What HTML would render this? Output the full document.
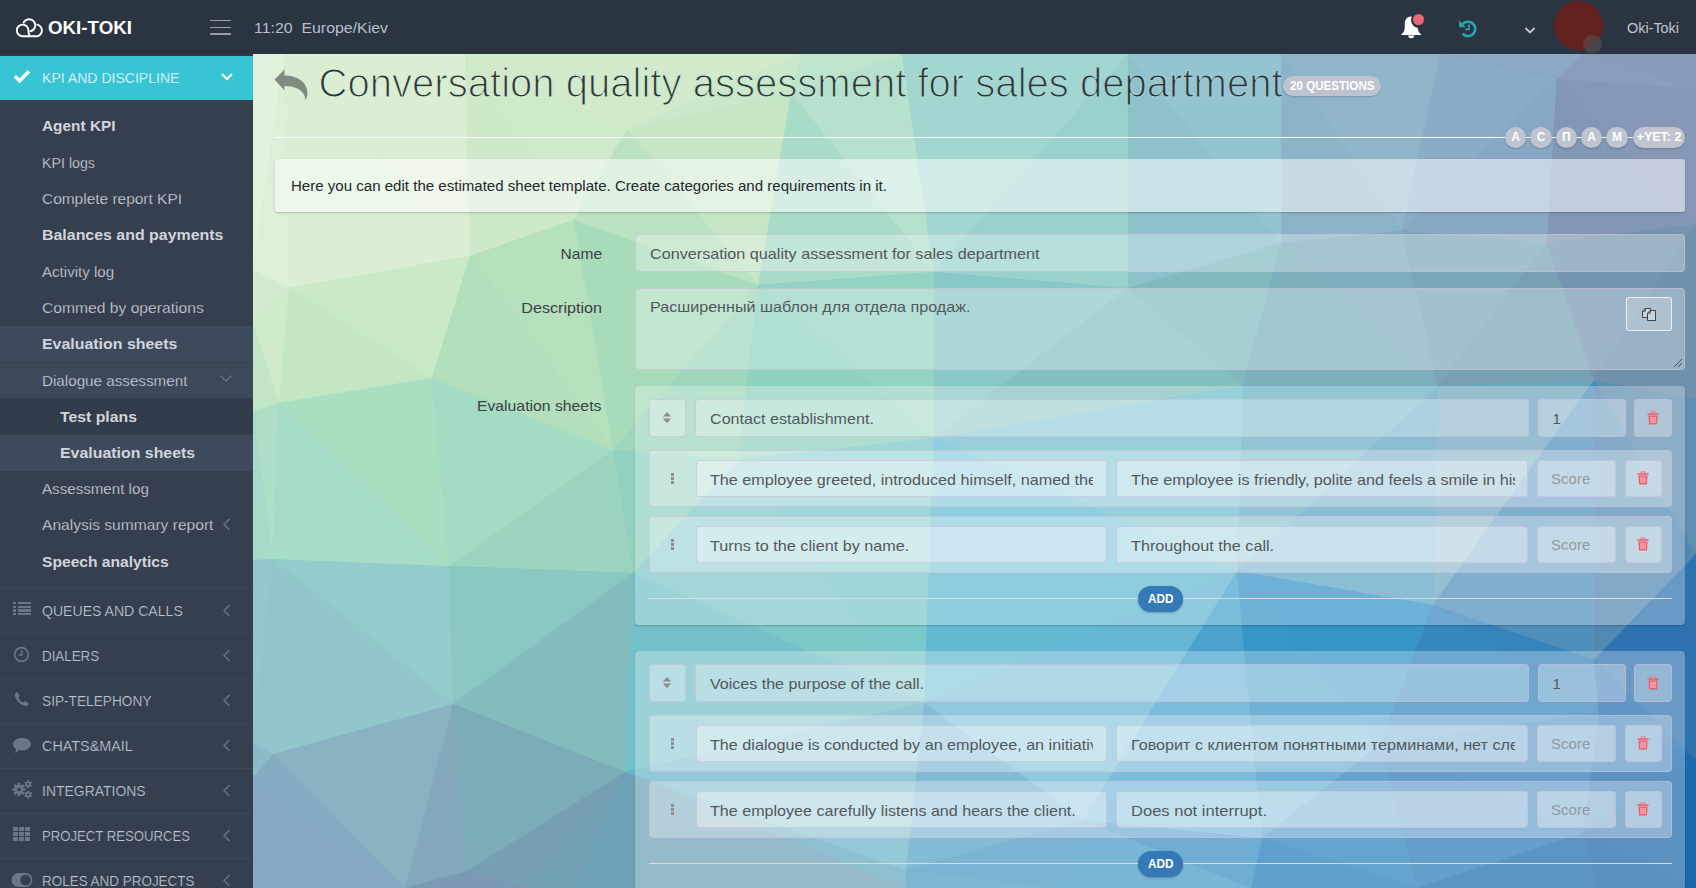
<!DOCTYPE html>
<html><head><meta charset="utf-8">
<style>
*{box-sizing:border-box;margin:0;padding:0}
html,body{width:1696px;height:888px;overflow:hidden;font-family:"Liberation Sans",sans-serif;background:#2b3543;position:relative}
.abs{position:absolute}
.t{position:absolute;white-space:nowrap;line-height:1}
.av{position:absolute;top:127px;height:21px;border-radius:11px;background:#bec5d0;color:#fff;font-weight:bold;font-size:12px;text-align:center;line-height:21px;box-shadow:0 1px 2px rgba(0,0,0,0.2)}
</style></head><body>
<div class="abs" style="left:253px;top:54px;width:1443px;height:834px;overflow:hidden"><svg width="1443" height="834" viewBox="0 0 1443 834" style="position:absolute;left:0;top:0"><polygon points="485,406 505,231 681,384" fill="#8fd1c1" stroke="#8fd1c1" stroke-width="0.6"/><polygon points="671,649 485,406 681,384" fill="#7ac8c9" stroke="#7ac8c9" stroke-width="0.6"/><polygon points="485,406 671,649 380,519" fill="#7ec7c8" stroke="#7ec7c8" stroke-width="0.6"/><polygon points="671,649 372,718 380,519" fill="#75c1c9" stroke="#75c1c9" stroke-width="0.6"/><polygon points="20,505 0,506 0,357" fill="#a7dbc8" stroke="#a7dbc8" stroke-width="0.6"/><polygon points="360,396 485,406 380,519" fill="#92d1bf" stroke="#92d1bf" stroke-width="0.6"/><polygon points="360,396 380,519 196,512" fill="#9bd5c0" stroke="#9bd5c0" stroke-width="0.6"/><polygon points="179,324 360,396 196,512" fill="#a4dbc3" stroke="#a4dbc3" stroke-width="0.6"/><polygon points="505,231 360,396 321,166" fill="#a8dbba" stroke="#a8dbba" stroke-width="0.6"/><polygon points="485,406 360,396 505,231" fill="#9ed7bc" stroke="#9ed7bc" stroke-width="0.6"/><polygon points="323,834 372,718 653,834" fill="#6ca1b6" stroke="#6ca1b6" stroke-width="0.6"/><polygon points="372,718 323,834 276,834" fill="#72a0b3" stroke="#72a0b3" stroke-width="0.6"/><polygon points="200,650 20,505 196,512" fill="#93ccca" stroke="#93ccca" stroke-width="0.6"/><polygon points="380,519 200,650 196,512" fill="#8cc8c2" stroke="#8cc8c2" stroke-width="0.6"/><polygon points="372,718 200,650 380,519" fill="#82bcbc" stroke="#82bcbc" stroke-width="0.6"/><polygon points="1294,189 1341,326 1185,332" fill="#77a1b3" stroke="#77a1b3" stroke-width="0.6"/><polygon points="1341,326 1443,170 1443,346" fill="#6e91ac" stroke="#6e91ac" stroke-width="0.6"/><polygon points="1443,170 1341,326 1294,189" fill="#7594b0" stroke="#7594b0" stroke-width="0.6"/><polygon points="1330,779 1443,706 1443,834" fill="#1c68ab" stroke="#1c68ab" stroke-width="0.6"/><polygon points="1341,326 1180,551 1185,332" fill="#6ea4be" stroke="#6ea4be" stroke-width="0.6"/><polygon points="1180,551 1341,326 1341,606" fill="#508fbb" stroke="#508fbb" stroke-width="0.6"/><polygon points="681,218 538,39 649,0" fill="#b6e1cc" stroke="#b6e1cc" stroke-width="0.6"/><polygon points="538,39 681,218 505,231" fill="#a9dcc8" stroke="#a9dcc8" stroke-width="0.6"/><polygon points="875,0 681,218 649,0" fill="#a2d6d1" stroke="#a2d6d1" stroke-width="0.6"/><polygon points="681,218 875,0 875,234" fill="#99d2cd" stroke="#99d2cd" stroke-width="0.6"/><polygon points="505,231 681,218 681,384" fill="#94d3c3" stroke="#94d3c3" stroke-width="0.6"/><polygon points="681,218 875,234 681,384" fill="#88c8c6" stroke="#88c8c6" stroke-width="0.6"/><polygon points="875,234 990,332 681,384" fill="#83c1bf" stroke="#83c1bf" stroke-width="0.6"/><polygon points="26,349 20,505 0,357" fill="#aedec6" stroke="#aedec6" stroke-width="0.6"/><polygon points="26,349 36,234 179,324" fill="#c3e6c5" stroke="#c3e6c5" stroke-width="0.6"/><polygon points="26,349 179,324 196,512" fill="#aadec1" stroke="#aadec1" stroke-width="0.6"/><polygon points="20,505 26,349 196,512" fill="#a7dcc6" stroke="#a7dcc6" stroke-width="0.6"/><polygon points="374,75 505,231 321,166" fill="#bce3c1" stroke="#bce3c1" stroke-width="0.6"/><polygon points="374,75 538,39 505,231" fill="#c6e6c6" stroke="#c6e6c6" stroke-width="0.6"/><polygon points="212,0 374,75 321,166" fill="#cfeaca" stroke="#cfeaca" stroke-width="0.6"/><polygon points="538,39 548,0 649,0" fill="#c0e4ce" stroke="#c0e4ce" stroke-width="0.6"/><polygon points="548,0 374,75 212,0" fill="#d0eacb" stroke="#d0eacb" stroke-width="0.6"/><polygon points="374,75 548,0 538,39" fill="#cae8ca" stroke="#cae8ca" stroke-width="0.6"/><polygon points="32,0 0,216 0,0" fill="#e2f2dc" stroke="#e2f2dc" stroke-width="0.6"/><polygon points="36,234 0,216 32,0" fill="#ddefd7" stroke="#ddefd7" stroke-width="0.6"/><polygon points="212,0 217,202 32,0" fill="#dbeed4" stroke="#dbeed4" stroke-width="0.6"/><polygon points="217,202 36,234 32,0" fill="#daeed4" stroke="#daeed4" stroke-width="0.6"/><polygon points="217,202 212,0 321,166" fill="#cde9c9" stroke="#cde9c9" stroke-width="0.6"/><polygon points="36,234 217,202 179,324" fill="#c9e9c7" stroke="#c9e9c7" stroke-width="0.6"/><polygon points="360,396 217,202 321,166" fill="#b5e1bc" stroke="#b5e1bc" stroke-width="0.6"/><polygon points="217,202 360,396 179,324" fill="#b2e0bc" stroke="#b2e0bc" stroke-width="0.6"/><polygon points="152,834 214,817 276,834" fill="#7b99b3" stroke="#7b99b3" stroke-width="0.6"/><polygon points="200,650 214,817 152,834" fill="#83a7bb" stroke="#83a7bb" stroke-width="0.6"/><polygon points="214,817 372,718 276,834" fill="#769fb3" stroke="#769fb3" stroke-width="0.6"/><polygon points="214,817 200,650 372,718" fill="#7cacb7" stroke="#7cacb7" stroke-width="0.6"/><polygon points="20,700 200,650 152,834" fill="#89b2c2" stroke="#89b2c2" stroke-width="0.6"/><polygon points="200,650 20,700 20,505" fill="#91c7ca" stroke="#91c7ca" stroke-width="0.6"/><polygon points="1187,0 1149,177 1028,0" fill="#91b6ca" stroke="#91b6ca" stroke-width="0.6"/><polygon points="1149,177 1294,189 1185,332" fill="#7ba5b8" stroke="#7ba5b8" stroke-width="0.6"/><polygon points="1443,500 1341,326 1443,346" fill="#5f8fb0" stroke="#5f8fb0" stroke-width="0.6"/><polygon points="1341,326 1443,500 1341,606" fill="#5289b3" stroke="#5289b3" stroke-width="0.6"/><polygon points="1443,500 1443,706 1341,606" fill="#2e73af" stroke="#2e73af" stroke-width="0.6"/><polygon points="1165,834 998,834 1009,784" fill="#227bb8" stroke="#227bb8" stroke-width="0.6"/><polygon points="1346,659 1180,551 1341,606" fill="#3684bc" stroke="#3684bc" stroke-width="0.6"/><polygon points="1443,706 1346,659 1341,606" fill="#236eaf" stroke="#236eaf" stroke-width="0.6"/><polygon points="1330,779 1346,659 1443,706" fill="#1d6bae" stroke="#1d6bae" stroke-width="0.6"/><polygon points="1180,551 984,517 1185,332" fill="#5da5c5" stroke="#5da5c5" stroke-width="0.6"/><polygon points="984,517 990,332 1185,332" fill="#6ab0c5" stroke="#6ab0c5" stroke-width="0.6"/><polygon points="984,517 671,649 681,384" fill="#61bad2" stroke="#61bad2" stroke-width="0.6"/><polygon points="990,332 984,517 681,384" fill="#6fbdcc" stroke="#6fbdcc" stroke-width="0.6"/><polygon points="809,834 830,766 998,834" fill="#4599c6" stroke="#4599c6" stroke-width="0.6"/><polygon points="998,834 830,766 1009,784" fill="#388ec1" stroke="#388ec1" stroke-width="0.6"/><polygon points="830,766 984,517 1009,784" fill="#4aa2cd" stroke="#4aa2cd" stroke-width="0.6"/><polygon points="984,517 830,766 671,649" fill="#65b5d3" stroke="#65b5d3" stroke-width="0.6"/><polygon points="0,269 0,216 36,234" fill="#d2ebcf" stroke="#d2ebcf" stroke-width="0.6"/><polygon points="0,269 26,349 0,357" fill="#c2e5c6" stroke="#c2e5c6" stroke-width="0.6"/><polygon points="26,349 0,269 36,234" fill="#d0ebcc" stroke="#d0ebcc" stroke-width="0.6"/><polygon points="0,724 152,834 0,834" fill="#85a8c3" stroke="#85a8c3" stroke-width="0.6"/><polygon points="0,724 20,700 152,834" fill="#85abc3" stroke="#85abc3" stroke-width="0.6"/><polygon points="1149,177 1304,25 1294,189" fill="#87a7c4" stroke="#87a7c4" stroke-width="0.6"/><polygon points="1304,25 1149,177 1187,0" fill="#8aacc7" stroke="#8aacc7" stroke-width="0.6"/><polygon points="1304,25 1443,35 1443,170" fill="#8697b7" stroke="#8697b7" stroke-width="0.6"/><polygon points="1304,25 1443,170 1294,189" fill="#8296b6" stroke="#8296b6" stroke-width="0.6"/><polygon points="1149,177 1028,189 1028,0" fill="#8cb4c8" stroke="#8cb4c8" stroke-width="0.6"/><polygon points="1028,189 875,0 1028,0" fill="#95c4d1" stroke="#95c4d1" stroke-width="0.6"/><polygon points="875,0 1028,189 875,234" fill="#8dc2cc" stroke="#8dc2cc" stroke-width="0.6"/><polygon points="1028,189 990,332 875,234" fill="#80babf" stroke="#80babf" stroke-width="0.6"/><polygon points="990,332 1028,189 1185,332" fill="#7aafbb" stroke="#7aafbb" stroke-width="0.6"/><polygon points="1028,189 1149,177 1185,332" fill="#7eadbd" stroke="#7eadbd" stroke-width="0.6"/><polygon points="1347,834 1330,779 1443,834" fill="#1966a8" stroke="#1966a8" stroke-width="0.6"/><polygon points="1347,834 1165,834 1330,779" fill="#1c6aab" stroke="#1c6aab" stroke-width="0.6"/><polygon points="984,517 1127,690 1009,784" fill="#3895c7" stroke="#3895c7" stroke-width="0.6"/><polygon points="1127,690 984,517 1180,551" fill="#3694c7" stroke="#3694c7" stroke-width="0.6"/><polygon points="1127,690 1165,834 1009,784" fill="#2982bc" stroke="#2982bc" stroke-width="0.6"/><polygon points="1346,659 1127,690 1180,551" fill="#3687be" stroke="#3687be" stroke-width="0.6"/><polygon points="1165,834 1127,690 1330,779" fill="#277ab6" stroke="#277ab6" stroke-width="0.6"/><polygon points="1127,690 1346,659 1330,779" fill="#2b7bb8" stroke="#2b7bb8" stroke-width="0.6"/><polygon points="653,816 809,834 653,834" fill="#4b9bc4" stroke="#4b9bc4" stroke-width="0.6"/><polygon points="653,816 830,766 809,834" fill="#4898c3" stroke="#4898c3" stroke-width="0.6"/><polygon points="830,766 653,816 671,649" fill="#51a1c7" stroke="#51a1c7" stroke-width="0.6"/><polygon points="372,718 653,816 653,834" fill="#65a8be" stroke="#65a8be" stroke-width="0.6"/><polygon points="671,649 653,816 372,718" fill="#6bb5c8" stroke="#6bb5c8" stroke-width="0.6"/><polygon points="0,724 0,689 20,700" fill="#8cbac8" stroke="#8cbac8" stroke-width="0.6"/><polygon points="20,505 0,689 0,506" fill="#92c8cb" stroke="#92c8cb" stroke-width="0.6"/><polygon points="20,700 0,689 20,505" fill="#90c5cb" stroke="#90c5cb" stroke-width="0.6"/><polygon points="1443,35 1329,0 1443,0" fill="#899abb" stroke="#899abb" stroke-width="0.6"/><polygon points="1304,25 1329,0 1443,35" fill="#8b9dbf" stroke="#8b9dbf" stroke-width="0.6"/><polygon points="1329,0 1304,25 1187,0" fill="#8ba8c4" stroke="#8ba8c4" stroke-width="0.6"/><polygon points="485,406 505,231 681,384" fill="#8fd1c1" stroke="#8fd1c1" stroke-width="0"/><polygon points="671,649 485,406 681,384" fill="#7ac8c9" stroke="#7ac8c9" stroke-width="0"/><polygon points="485,406 671,649 380,519" fill="#7ec7c8" stroke="#7ec7c8" stroke-width="0"/><polygon points="671,649 372,718 380,519" fill="#75c1c9" stroke="#75c1c9" stroke-width="0"/><polygon points="20,505 0,506 0,357" fill="#a7dbc8" stroke="#a7dbc8" stroke-width="0"/><polygon points="360,396 485,406 380,519" fill="#92d1bf" stroke="#92d1bf" stroke-width="0"/><polygon points="360,396 380,519 196,512" fill="#9bd5c0" stroke="#9bd5c0" stroke-width="0"/><polygon points="179,324 360,396 196,512" fill="#a4dbc3" stroke="#a4dbc3" stroke-width="0"/><polygon points="505,231 360,396 321,166" fill="#a8dbba" stroke="#a8dbba" stroke-width="0"/><polygon points="485,406 360,396 505,231" fill="#9ed7bc" stroke="#9ed7bc" stroke-width="0"/><polygon points="323,834 372,718 653,834" fill="#6ca1b6" stroke="#6ca1b6" stroke-width="0"/><polygon points="372,718 323,834 276,834" fill="#72a0b3" stroke="#72a0b3" stroke-width="0"/><polygon points="200,650 20,505 196,512" fill="#93ccca" stroke="#93ccca" stroke-width="0"/><polygon points="380,519 200,650 196,512" fill="#8cc8c2" stroke="#8cc8c2" stroke-width="0"/><polygon points="372,718 200,650 380,519" fill="#82bcbc" stroke="#82bcbc" stroke-width="0"/><polygon points="1294,189 1341,326 1185,332" fill="#77a1b3" stroke="#77a1b3" stroke-width="0"/><polygon points="1341,326 1443,170 1443,346" fill="#6e91ac" stroke="#6e91ac" stroke-width="0"/><polygon points="1443,170 1341,326 1294,189" fill="#7594b0" stroke="#7594b0" stroke-width="0"/><polygon points="1330,779 1443,706 1443,834" fill="#1c68ab" stroke="#1c68ab" stroke-width="0"/><polygon points="1341,326 1180,551 1185,332" fill="#6ea4be" stroke="#6ea4be" stroke-width="0"/><polygon points="1180,551 1341,326 1341,606" fill="#508fbb" stroke="#508fbb" stroke-width="0"/><polygon points="681,218 538,39 649,0" fill="#b6e1cc" stroke="#b6e1cc" stroke-width="0"/><polygon points="538,39 681,218 505,231" fill="#a9dcc8" stroke="#a9dcc8" stroke-width="0"/><polygon points="875,0 681,218 649,0" fill="#a2d6d1" stroke="#a2d6d1" stroke-width="0"/><polygon points="681,218 875,0 875,234" fill="#99d2cd" stroke="#99d2cd" stroke-width="0"/><polygon points="505,231 681,218 681,384" fill="#94d3c3" stroke="#94d3c3" stroke-width="0"/><polygon points="681,218 875,234 681,384" fill="#88c8c6" stroke="#88c8c6" stroke-width="0"/><polygon points="875,234 990,332 681,384" fill="#83c1bf" stroke="#83c1bf" stroke-width="0"/><polygon points="26,349 20,505 0,357" fill="#aedec6" stroke="#aedec6" stroke-width="0"/><polygon points="26,349 36,234 179,324" fill="#c3e6c5" stroke="#c3e6c5" stroke-width="0"/><polygon points="26,349 179,324 196,512" fill="#aadec1" stroke="#aadec1" stroke-width="0"/><polygon points="20,505 26,349 196,512" fill="#a7dcc6" stroke="#a7dcc6" stroke-width="0"/><polygon points="374,75 505,231 321,166" fill="#bce3c1" stroke="#bce3c1" stroke-width="0"/><polygon points="374,75 538,39 505,231" fill="#c6e6c6" stroke="#c6e6c6" stroke-width="0"/><polygon points="212,0 374,75 321,166" fill="#cfeaca" stroke="#cfeaca" stroke-width="0"/><polygon points="538,39 548,0 649,0" fill="#c0e4ce" stroke="#c0e4ce" stroke-width="0"/><polygon points="548,0 374,75 212,0" fill="#d0eacb" stroke="#d0eacb" stroke-width="0"/><polygon points="374,75 548,0 538,39" fill="#cae8ca" stroke="#cae8ca" stroke-width="0"/><polygon points="32,0 0,216 0,0" fill="#e2f2dc" stroke="#e2f2dc" stroke-width="0"/><polygon points="36,234 0,216 32,0" fill="#ddefd7" stroke="#ddefd7" stroke-width="0"/><polygon points="212,0 217,202 32,0" fill="#dbeed4" stroke="#dbeed4" stroke-width="0"/><polygon points="217,202 36,234 32,0" fill="#daeed4" stroke="#daeed4" stroke-width="0"/><polygon points="217,202 212,0 321,166" fill="#cde9c9" stroke="#cde9c9" stroke-width="0"/><polygon points="36,234 217,202 179,324" fill="#c9e9c7" stroke="#c9e9c7" stroke-width="0"/><polygon points="360,396 217,202 321,166" fill="#b5e1bc" stroke="#b5e1bc" stroke-width="0"/><polygon points="217,202 360,396 179,324" fill="#b2e0bc" stroke="#b2e0bc" stroke-width="0"/><polygon points="152,834 214,817 276,834" fill="#7b99b3" stroke="#7b99b3" stroke-width="0"/><polygon points="200,650 214,817 152,834" fill="#83a7bb" stroke="#83a7bb" stroke-width="0"/><polygon points="214,817 372,718 276,834" fill="#769fb3" stroke="#769fb3" stroke-width="0"/><polygon points="214,817 200,650 372,718" fill="#7cacb7" stroke="#7cacb7" stroke-width="0"/><polygon points="20,700 200,650 152,834" fill="#89b2c2" stroke="#89b2c2" stroke-width="0"/><polygon points="200,650 20,700 20,505" fill="#91c7ca" stroke="#91c7ca" stroke-width="0"/><polygon points="1187,0 1149,177 1028,0" fill="#91b6ca" stroke="#91b6ca" stroke-width="0"/><polygon points="1149,177 1294,189 1185,332" fill="#7ba5b8" stroke="#7ba5b8" stroke-width="0"/><polygon points="1443,500 1341,326 1443,346" fill="#5f8fb0" stroke="#5f8fb0" stroke-width="0"/><polygon points="1341,326 1443,500 1341,606" fill="#5289b3" stroke="#5289b3" stroke-width="0"/><polygon points="1443,500 1443,706 1341,606" fill="#2e73af" stroke="#2e73af" stroke-width="0"/><polygon points="1165,834 998,834 1009,784" fill="#227bb8" stroke="#227bb8" stroke-width="0"/><polygon points="1346,659 1180,551 1341,606" fill="#3684bc" stroke="#3684bc" stroke-width="0"/><polygon points="1443,706 1346,659 1341,606" fill="#236eaf" stroke="#236eaf" stroke-width="0"/><polygon points="1330,779 1346,659 1443,706" fill="#1d6bae" stroke="#1d6bae" stroke-width="0"/><polygon points="1180,551 984,517 1185,332" fill="#5da5c5" stroke="#5da5c5" stroke-width="0"/><polygon points="984,517 990,332 1185,332" fill="#6ab0c5" stroke="#6ab0c5" stroke-width="0"/><polygon points="984,517 671,649 681,384" fill="#61bad2" stroke="#61bad2" stroke-width="0"/><polygon points="990,332 984,517 681,384" fill="#6fbdcc" stroke="#6fbdcc" stroke-width="0"/><polygon points="809,834 830,766 998,834" fill="#4599c6" stroke="#4599c6" stroke-width="0"/><polygon points="998,834 830,766 1009,784" fill="#388ec1" stroke="#388ec1" stroke-width="0"/><polygon points="830,766 984,517 1009,784" fill="#4aa2cd" stroke="#4aa2cd" stroke-width="0"/><polygon points="984,517 830,766 671,649" fill="#65b5d3" stroke="#65b5d3" stroke-width="0"/><polygon points="0,269 0,216 36,234" fill="#d2ebcf" stroke="#d2ebcf" stroke-width="0"/><polygon points="0,269 26,349 0,357" fill="#c2e5c6" stroke="#c2e5c6" stroke-width="0"/><polygon points="26,349 0,269 36,234" fill="#d0ebcc" stroke="#d0ebcc" stroke-width="0"/><polygon points="0,724 152,834 0,834" fill="#85a8c3" stroke="#85a8c3" stroke-width="0"/><polygon points="0,724 20,700 152,834" fill="#85abc3" stroke="#85abc3" stroke-width="0"/><polygon points="1149,177 1304,25 1294,189" fill="#87a7c4" stroke="#87a7c4" stroke-width="0"/><polygon points="1304,25 1149,177 1187,0" fill="#8aacc7" stroke="#8aacc7" stroke-width="0"/><polygon points="1304,25 1443,35 1443,170" fill="#8697b7" stroke="#8697b7" stroke-width="0"/><polygon points="1304,25 1443,170 1294,189" fill="#8296b6" stroke="#8296b6" stroke-width="0"/><polygon points="1149,177 1028,189 1028,0" fill="#8cb4c8" stroke="#8cb4c8" stroke-width="0"/><polygon points="1028,189 875,0 1028,0" fill="#95c4d1" stroke="#95c4d1" stroke-width="0"/><polygon points="875,0 1028,189 875,234" fill="#8dc2cc" stroke="#8dc2cc" stroke-width="0"/><polygon points="1028,189 990,332 875,234" fill="#80babf" stroke="#80babf" stroke-width="0"/><polygon points="990,332 1028,189 1185,332" fill="#7aafbb" stroke="#7aafbb" stroke-width="0"/><polygon points="1028,189 1149,177 1185,332" fill="#7eadbd" stroke="#7eadbd" stroke-width="0"/><polygon points="1347,834 1330,779 1443,834" fill="#1966a8" stroke="#1966a8" stroke-width="0"/><polygon points="1347,834 1165,834 1330,779" fill="#1c6aab" stroke="#1c6aab" stroke-width="0"/><polygon points="984,517 1127,690 1009,784" fill="#3895c7" stroke="#3895c7" stroke-width="0"/><polygon points="1127,690 984,517 1180,551" fill="#3694c7" stroke="#3694c7" stroke-width="0"/><polygon points="1127,690 1165,834 1009,784" fill="#2982bc" stroke="#2982bc" stroke-width="0"/><polygon points="1346,659 1127,690 1180,551" fill="#3687be" stroke="#3687be" stroke-width="0"/><polygon points="1165,834 1127,690 1330,779" fill="#277ab6" stroke="#277ab6" stroke-width="0"/><polygon points="1127,690 1346,659 1330,779" fill="#2b7bb8" stroke="#2b7bb8" stroke-width="0"/><polygon points="653,816 809,834 653,834" fill="#4b9bc4" stroke="#4b9bc4" stroke-width="0"/><polygon points="653,816 830,766 809,834" fill="#4898c3" stroke="#4898c3" stroke-width="0"/><polygon points="830,766 653,816 671,649" fill="#51a1c7" stroke="#51a1c7" stroke-width="0"/><polygon points="372,718 653,816 653,834" fill="#65a8be" stroke="#65a8be" stroke-width="0"/><polygon points="671,649 653,816 372,718" fill="#6bb5c8" stroke="#6bb5c8" stroke-width="0"/><polygon points="0,724 0,689 20,700" fill="#8cbac8" stroke="#8cbac8" stroke-width="0"/><polygon points="20,505 0,689 0,506" fill="#92c8cb" stroke="#92c8cb" stroke-width="0"/><polygon points="20,700 0,689 20,505" fill="#90c5cb" stroke="#90c5cb" stroke-width="0"/><polygon points="1443,35 1329,0 1443,0" fill="#899abb" stroke="#899abb" stroke-width="0"/><polygon points="1304,25 1329,0 1443,35" fill="#8b9dbf" stroke="#8b9dbf" stroke-width="0"/><polygon points="1329,0 1304,25 1187,0" fill="#8ba8c4" stroke="#8ba8c4" stroke-width="0"/></svg></div>
<div class="abs" style="left:0px;top:0px;width:1696px;height:54px;background:#2b3542"></div>
<svg class="abs" style="left:12px;top:14px" width="34" height="28" viewBox="0 0 34 28">
<g fill="none" stroke="#fff" stroke-width="1.9" stroke-linecap="round">
<path d="M11.7 8.6 A6.1 6.1 0 1 1 18.4 17.3"/>
<path d="M17.6 21.4 C16.6 20.2 16.4 18.4 16.4 16.6 A5.8 5.8 0 1 0 10.6 22.2 H22.6"/>
<path d="M25.4 10.6 A5.9 5.9 0 0 1 22.4 22.2"/>
</g></svg>
<div class="t" style="left:48.00px;transform-origin:left center;top:18.42px;font-size:19px;font-weight:bold;color:#fff;transform:scaleX(0.9864);">OKI-TOKI</div>
<div class="abs" style="left:210px;top:20px;width:21px;height:1.4px;background:#959da7"></div>
<div class="abs" style="left:210px;top:27px;width:21px;height:1.4px;background:#959da7"></div>
<div class="abs" style="left:210px;top:33.2px;width:21px;height:1.4px;background:#959da7"></div>
<div class="t" style="left:254.00px;transform-origin:left center;top:20.30px;font-size:15px;font-weight:normal;color:#b6bfca;transform:scaleX(1.0594);">11:20&nbsp;&nbsp;Europe/Kiev</div>
<svg class="abs" style="left:1399px;top:14px" width="26" height="26" viewBox="0 0 26 26">
<path fill="#fff" d="M11 2.5 C7.2 3.2 5.8 6.5 5.8 10 V13.5 C5.8 16.5 4.5 18.5 2 21 H22.5 C20 18.5 18.7 16.5 18.7 13.5 V10 C18.7 6.5 16 3.2 12.5 2.5z"/>
<path fill="#fff" d="M9.2 21.5 A3 2.8 0 0 0 15.2 21.5z"/>
</svg>
<div class="abs" style="left:1410.5px;top:11.5px;width:16px;height:16px;border-radius:50%;background:#2b3542"></div>
<div class="abs" style="left:1412.8px;top:13.8px;width:11.4px;height:11.4px;border-radius:50%;background:#ec6774"></div>
<svg class="abs" style="left:1458px;top:19px" width="20" height="19" viewBox="0 0 20 19">
<path fill="none" stroke="#27a8b7" stroke-width="2.6" d="M4.6 5.2 A7.2 7.2 0 1 1 4.6 14.6"/>
<path fill="#27a8b7" d="M1.2 1.5 L1.2 8.2 L7.6 8.2z"/>
<path fill="none" stroke="#27a8b7" stroke-width="1.6" d="M11 5.5 V10.4 H7.5"/>
</svg>
<svg class="abs" style="left:1524px;top:26px" width="12" height="9" viewBox="0 0 12 9"><path fill="none" stroke="#c5cbd3" stroke-width="1.8" d="M1.5 2 L6 6.5 L10.5 2"/></svg>
<div class="abs" style="left:1554.2px;top:0.9px;width:48.8px;height:48.8px;border-radius:50%;background:#63211f"></div>
<div class="abs" style="left:1582.8px;top:34.5px;width:18.8px;height:18.8px;border-radius:50%;background:rgba(85,85,85,0.55)"></div>
<div class="t" style="left:1627.00px;transform-origin:left center;top:20.30px;font-size:15px;font-weight:normal;color:#c0c6cc;transform:scaleX(0.9599);">Oki-Toki</div>
<div class="abs" style="left:0px;top:54px;width:253px;height:834px;background:#353f4e"></div>
<div class="abs" style="left:0px;top:54px;width:253px;height:2px;background:#333947"></div>
<div class="abs" style="left:0px;top:56px;width:253px;height:44px;background:#37c4d5"></div>
<svg class="abs" style="left:13px;top:69px" width="18" height="15" viewBox="0 0 18 15"><path fill="none" stroke="#fff" stroke-width="3.4" d="M1.8 7.2 L6.6 11.8 L16 2.2"/></svg>
<div class="t" style="left:42.30px;transform-origin:left center;top:70.20px;font-size:15px;font-weight:normal;color:#fff;transform:scaleX(0.9372);-webkit-text-stroke:0.3px #37c4d5;">KPI AND DISCIPLINE</div>
<svg class="abs" style="left:220px;top:72px" width="14" height="10" viewBox="0 0 14 10"><path fill="none" stroke="#fff" stroke-width="2" d="M2 2 L7 7 L12 2"/></svg>
<div class="abs" style="left:0px;top:326px;width:253px;height:36px;background:#3e4a5b"></div>
<div class="abs" style="left:0px;top:362px;width:253px;height:1px;background:#37414f"></div>
<div class="abs" style="left:0px;top:363px;width:253px;height:35px;background:#3d4859"></div>
<div class="abs" style="left:0px;top:398px;width:253px;height:37px;background:#323c4a"></div>
<div class="abs" style="left:0px;top:435px;width:253px;height:36px;background:#3e4a5b"></div>
<div class="t" style="left:41.60px;transform-origin:left center;top:118.20px;font-size:15px;font-weight:bold;color:#d1d5db;transform:scaleX(1.0269);">Agent KPI</div>
<div class="t" style="left:41.60px;transform-origin:left center;top:154.80px;font-size:15px;font-weight:normal;color:#cfd4db;transform:scaleX(0.9485);-webkit-text-stroke:0.25px #353f4e;">KPI logs</div>
<div class="t" style="left:41.60px;transform-origin:left center;top:190.70px;font-size:15px;font-weight:normal;color:#cfd4db;transform:scaleX(1.0301);-webkit-text-stroke:0.25px #353f4e;">Complete report KPI</div>
<div class="t" style="left:41.60px;transform-origin:left center;top:227.20px;font-size:15px;font-weight:bold;color:#d1d5db;transform:scaleX(1.0614);">Balances and payments</div>
<div class="t" style="left:41.60px;transform-origin:left center;top:263.60px;font-size:15px;font-weight:normal;color:#cfd4db;transform:scaleX(1.0055);-webkit-text-stroke:0.25px #353f4e;">Activity log</div>
<div class="t" style="left:41.60px;transform-origin:left center;top:300.00px;font-size:15px;font-weight:normal;color:#cfd4db;transform:scaleX(1.0427);-webkit-text-stroke:0.25px #353f4e;">Commed by operations</div>
<div class="t" style="left:41.80px;transform-origin:left center;top:336.30px;font-size:15px;font-weight:bold;color:#d1d5db;transform:scaleX(1.0608);">Evaluation sheets</div>
<div class="t" style="left:41.80px;transform-origin:left center;top:372.60px;font-size:15px;font-weight:normal;color:#cfd4db;transform:scaleX(1.0138);-webkit-text-stroke:0.25px #3d4859;">Dialogue assessment</div>
<div class="t" style="left:60.40px;transform-origin:left center;top:409.10px;font-size:15px;font-weight:bold;color:#d1d5db;transform:scaleX(1.0537);">Test plans</div>
<div class="t" style="left:60.40px;transform-origin:left center;top:445.30px;font-size:15px;font-weight:bold;color:#d1d5db;transform:scaleX(1.0600);">Evaluation sheets</div>
<div class="t" style="left:41.60px;transform-origin:left center;top:481.30px;font-size:15px;font-weight:normal;color:#cfd4db;transform:scaleX(1.0086);-webkit-text-stroke:0.25px #353f4e;">Assessment log</div>
<div class="t" style="left:41.60px;transform-origin:left center;top:517.30px;font-size:15px;font-weight:normal;color:#cfd4db;transform:scaleX(1.0385);-webkit-text-stroke:0.25px #353f4e;">Analysis summary report</div>
<div class="t" style="left:41.60px;transform-origin:left center;top:553.80px;font-size:15px;font-weight:bold;color:#d1d5db;transform:scaleX(1.0408);">Speech analytics</div>
<svg class="abs" style="left:219px;top:374px" width="14" height="9" viewBox="0 0 14 9"><path fill="none" stroke="#657080" stroke-width="1.3" d="M1.5 1.5 L7 7 L12.5 1.5"/></svg>
<svg class="abs" style="left:222px;top:518px" width="9" height="13" viewBox="0 0 9 13"><path fill="none" stroke="#6a7585" stroke-width="1.4" d="M7.5 1 L2 6.5 L7.5 12"/></svg>
<div class="abs" style="left:0px;top:588px;width:253px;height:1px;background:#3e4857"></div>
<div class="t" style="left:42.30px;transform-origin:left center;top:603.30px;font-size:15px;font-weight:normal;color:#bcc4ce;transform:scaleX(0.9383);-webkit-text-stroke:0.2px #353f4e;">QUEUES AND CALLS</div>
<svg class="abs" style="left:222px;top:604px" width="9" height="13" viewBox="0 0 9 13"><path fill="none" stroke="#6a7585" stroke-width="1.4" d="M7.5 1 L2 6.5 L7.5 12"/></svg>
<div class="abs" style="left:0px;top:633px;width:253px;height:1px;background:#3e4857"></div>
<div class="t" style="left:42.30px;transform-origin:left center;top:648.30px;font-size:15px;font-weight:normal;color:#bcc4ce;transform:scaleX(0.8909);-webkit-text-stroke:0.2px #353f4e;">DIALERS</div>
<svg class="abs" style="left:222px;top:649px" width="9" height="13" viewBox="0 0 9 13"><path fill="none" stroke="#6a7585" stroke-width="1.4" d="M7.5 1 L2 6.5 L7.5 12"/></svg>
<div class="abs" style="left:0px;top:678px;width:253px;height:1px;background:#3e4857"></div>
<div class="t" style="left:42.30px;transform-origin:left center;top:693.30px;font-size:15px;font-weight:normal;color:#bcc4ce;transform:scaleX(0.9123);-webkit-text-stroke:0.2px #353f4e;">SIP-TELEPHONY</div>
<svg class="abs" style="left:222px;top:694px" width="9" height="13" viewBox="0 0 9 13"><path fill="none" stroke="#6a7585" stroke-width="1.4" d="M7.5 1 L2 6.5 L7.5 12"/></svg>
<div class="abs" style="left:0px;top:723px;width:253px;height:1px;background:#3e4857"></div>
<div class="t" style="left:42.30px;transform-origin:left center;top:738.30px;font-size:15px;font-weight:normal;color:#bcc4ce;transform:scaleX(0.9583);-webkit-text-stroke:0.2px #353f4e;">CHATS&amp;MAIL</div>
<svg class="abs" style="left:222px;top:739px" width="9" height="13" viewBox="0 0 9 13"><path fill="none" stroke="#6a7585" stroke-width="1.4" d="M7.5 1 L2 6.5 L7.5 12"/></svg>
<div class="abs" style="left:0px;top:768px;width:253px;height:1px;background:#3e4857"></div>
<div class="t" style="left:42.30px;transform-origin:left center;top:783.30px;font-size:15px;font-weight:normal;color:#bcc4ce;transform:scaleX(0.9308);-webkit-text-stroke:0.2px #353f4e;">INTEGRATIONS</div>
<svg class="abs" style="left:222px;top:784px" width="9" height="13" viewBox="0 0 9 13"><path fill="none" stroke="#6a7585" stroke-width="1.4" d="M7.5 1 L2 6.5 L7.5 12"/></svg>
<div class="abs" style="left:0px;top:813px;width:253px;height:1px;background:#3e4857"></div>
<div class="t" style="left:42.30px;transform-origin:left center;top:828.30px;font-size:15px;font-weight:normal;color:#bcc4ce;transform:scaleX(0.8761);-webkit-text-stroke:0.2px #353f4e;">PROJECT RESOURCES</div>
<svg class="abs" style="left:222px;top:829px" width="9" height="13" viewBox="0 0 9 13"><path fill="none" stroke="#6a7585" stroke-width="1.4" d="M7.5 1 L2 6.5 L7.5 12"/></svg>
<div class="abs" style="left:0px;top:858px;width:253px;height:1px;background:#3e4857"></div>
<div class="t" style="left:42.30px;transform-origin:left center;top:873.30px;font-size:15px;font-weight:normal;color:#bcc4ce;transform:scaleX(0.8968);-webkit-text-stroke:0.2px #353f4e;">ROLES AND PROJECTS</div>
<svg class="abs" style="left:222px;top:874px" width="9" height="13" viewBox="0 0 9 13"><path fill="none" stroke="#6a7585" stroke-width="1.4" d="M7.5 1 L2 6.5 L7.5 12"/></svg>
<div class="abs" style="left:13px;top:602.0px;width:3px;height:2.4px;background:#6b7686"></div>
<div class="abs" style="left:17.5px;top:602.0px;width:13.5px;height:2.4px;background:#6b7686"></div>
<div class="abs" style="left:13px;top:605.6px;width:3px;height:2.4px;background:#6b7686"></div>
<div class="abs" style="left:17.5px;top:605.6px;width:13.5px;height:2.4px;background:#6b7686"></div>
<div class="abs" style="left:13px;top:609.2px;width:3px;height:2.4px;background:#6b7686"></div>
<div class="abs" style="left:17.5px;top:609.2px;width:13.5px;height:2.4px;background:#6b7686"></div>
<div class="abs" style="left:13px;top:612.8px;width:3px;height:2.4px;background:#6b7686"></div>
<div class="abs" style="left:17.5px;top:612.8px;width:13.5px;height:2.4px;background:#6b7686"></div>
<svg class="abs" style="left:13px;top:646px" width="17" height="17" viewBox="0 0 17 17"><circle cx="8.5" cy="8.5" r="6.8" fill="none" stroke="#6b7686" stroke-width="1.7"/><path d="M8.8 4.5 V9 H5.5" fill="none" stroke="#6b7686" stroke-width="1.4"/></svg>
<svg class="abs" style="left:13px;top:691px" width="17" height="16" viewBox="0 0 17 16"><path fill="#6b7686" d="M2.2 2.6 C2.8 1.6 3.8 0.9 4.6 1.2 L6.6 4.6 C6.8 5.2 6.2 5.9 5.2 6.6 C6 8.8 8 10.8 10.2 11.6 C10.9 10.6 11.6 10 12.2 10.2 L15.6 12.2 C15.9 13 15.2 14 14.2 14.6 C12.6 15.6 9.2 14.8 6 11.6 C2.4 8 1.2 4.4 2.2 2.6z"/></svg>
<svg class="abs" style="left:12px;top:737px" width="20" height="18" viewBox="0 0 20 18"><path fill="#6b7686" d="M10 1 C15.2 1 19 3.7 19 7.2 C19 10.7 15.2 13.4 10 13.4 C9 13.4 8 13.3 7.1 13.1 L3.2 16.6 L4.3 12.2 C2.2 11.1 1 9.3 1 7.2 C1 3.7 4.8 1 10 1z"/></svg>
<svg class="abs" style="left:12px;top:780px" width="21" height="19" viewBox="0 0 21 19">
<g fill="#6b7686">
<circle cx="7" cy="9.5" r="4.6"/>
<g transform="translate(7 9.5)"><rect x="-1.3" y="-6.6" width="2.6" height="13.2"/><rect x="-1.3" y="-6.6" width="2.6" height="13.2" transform="rotate(45)"/><rect x="-1.3" y="-6.6" width="2.6" height="13.2" transform="rotate(90)"/><rect x="-1.3" y="-6.6" width="2.6" height="13.2" transform="rotate(135)"/></g>
<circle cx="16.2" cy="4.2" r="2.8"/><circle cx="16.2" cy="14.6" r="2.8"/>
<g transform="translate(16.2 4.2)"><rect x="-0.9" y="-4" width="1.8" height="8"/><rect x="-0.9" y="-4" width="1.8" height="8" transform="rotate(60)"/><rect x="-0.9" y="-4" width="1.8" height="8" transform="rotate(120)"/></g>
<g transform="translate(16.2 14.6)"><rect x="-0.9" y="-4" width="1.8" height="8"/><rect x="-0.9" y="-4" width="1.8" height="8" transform="rotate(60)"/><rect x="-0.9" y="-4" width="1.8" height="8" transform="rotate(120)"/></g>
</g>
<circle cx="7" cy="9.5" r="1.8" fill="#353f4e"/><circle cx="16.2" cy="4.2" r="1.1" fill="#353f4e"/><circle cx="16.2" cy="14.6" r="1.1" fill="#353f4e"/>
</svg>
<div class="abs" style="left:12.5px;top:827.0px;width:5px;height:4px;background:#6b7686"></div>
<div class="abs" style="left:18.9px;top:827.0px;width:5px;height:4px;background:#6b7686"></div>
<div class="abs" style="left:25.3px;top:827.0px;width:5px;height:4px;background:#6b7686"></div>
<div class="abs" style="left:12.5px;top:831.9px;width:5px;height:4px;background:#6b7686"></div>
<div class="abs" style="left:18.9px;top:831.9px;width:5px;height:4px;background:#6b7686"></div>
<div class="abs" style="left:25.3px;top:831.9px;width:5px;height:4px;background:#6b7686"></div>
<div class="abs" style="left:12.5px;top:836.8px;width:5px;height:4px;background:#6b7686"></div>
<div class="abs" style="left:18.9px;top:836.8px;width:5px;height:4px;background:#6b7686"></div>
<div class="abs" style="left:25.3px;top:836.8px;width:5px;height:4px;background:#6b7686"></div>
<svg class="abs" style="left:11px;top:872px" width="22" height="16" viewBox="0 0 22 16"><rect x="0.5" y="1" width="21" height="14" rx="7" fill="#6b7686"/><circle cx="14.5" cy="8" r="5.3" fill="#353f4e"/></svg>
<svg class="abs" style="left:274px;top:69px" width="35" height="32" viewBox="0 0 35 32">
<path fill="#7f8a80" d="M0.5 10.5 L10.5 0.5 V6.5 C22 6.5 33 12 33.5 24 C33.5 27 32.5 29.5 31.5 31 C31 21.5 22 17 10.5 17 V21.5z"/>
</svg>
<svg class="abs" style="left:0;top:0;overflow:visible" width="1696" height="120">
<defs><linearGradient id="tg" gradientUnits="userSpaceOnUse" x1="320" y1="0" x2="1282" y2="0">
<stop offset="0" stop-color="#dcf0d6"/><stop offset="0.3" stop-color="#d2ebcc"/><stop offset="0.5" stop-color="#c4e6cc"/><stop offset="0.7" stop-color="#a8d8d4"/><stop offset="1" stop-color="#9cc6d6"/></linearGradient></defs>
<text x="318.6" y="96.7" font-family="Liberation Sans" font-size="40" textLength="964" lengthAdjust="spacingAndGlyphs" fill="#2f3539" stroke="url(#tg)" stroke-width="1.2">Conversation quality assessment for sales department</text>
</svg>
<div class="abs" style="left:1283px;top:76px;width:98px;height:20px;border-radius:10px;background:#bdc4cf;box-shadow:0 1px 2px rgba(0,0,0,0.18)"></div>
<div class="t" style="left:1290.00px;transform-origin:left center;top:79.64px;font-size:12px;font-weight:bold;color:#fff;transform:scaleX(0.9673);">20 QUESTIONS</div>
<div class="abs" style="left:275px;top:136.5px;width:1400px;height:1.6px;background:rgba(255,255,255,0.95)"></div>
<div class="av" style="left:1504.8px;width:21.6px">A</div>
<div class="av" style="left:1530.2px;width:21.6px">C</div>
<div class="av" style="left:1555.5px;width:21.6px">П</div>
<div class="av" style="left:1580.7px;width:21.6px">A</div>
<div class="av" style="left:1606.2px;width:21.6px">M</div>
<div class="av" style="left:1633px;width:52px;font-size:12.5px">+YET: 2</div>
<div class="abs" style="left:275px;top:159px;width:1410px;height:53px;border-radius:3px;background:rgba(255,255,255,0.52);box-shadow:0 1px 2px rgba(0,0,0,0.22)"></div>
<div class="t" style="left:291.40px;transform-origin:left center;top:179.15px;font-size:14px;font-weight:normal;color:#23282c;transform:scaleX(1.0756);">Here you can edit the estimated sheet template. Create categories and requirements in it.</div>
<div class="t" style="right:1094.20px;transform-origin:right center;top:245.90px;font-size:15px;font-weight:normal;color:#3b4045;transform:scaleX(1.0346);">Name</div>
<div class="t" style="right:1094.20px;transform-origin:right center;top:299.60px;font-size:15px;font-weight:normal;color:#3b4045;transform:scaleX(1.0756);">Description</div>
<div class="t" style="right:1094.20px;transform-origin:right center;top:397.80px;font-size:15px;font-weight:normal;color:#3b4045;transform:scaleX(1.0513);">Evaluation sheets</div>
<div class="abs" style="left:635px;top:234px;width:1050px;height:38px;border:1px solid rgba(200,188,212,0.65);border-radius:4px;background:rgba(255,255,255,0.3)"></div>
<div class="t" style="left:650.00px;transform-origin:left center;top:246.20px;font-size:15px;font-weight:normal;color:#53585c;transform:scaleX(1.0789);">Conversation quality assessment for sales department</div>
<div class="abs" style="left:635px;top:288px;width:1050px;height:82px;border:1px solid rgba(200,188,212,0.65);border-radius:4px;background:rgba(255,255,255,0.3)"></div>
<div class="t" style="left:650.00px;transform-origin:left center;top:299.30px;font-size:15px;font-weight:normal;color:#53585c;transform:scaleX(1.0749);">Расширенный шаблон для отдела продаж.</div>
<div class="abs" style="left:1626px;top:297px;width:46px;height:34px;border:1.2px solid rgba(255,255,255,0.75);border-radius:3px;background:rgba(255,255,255,0.2)"></div>
<svg class="abs" style="left:1641px;top:307px" width="16" height="15" viewBox="0 0 16 15">
<g fill="#c9d5dd" stroke="#333" stroke-width="0.9" stroke-linejoin="miter">
<path d="M1.5 4.2 L4.3 1.5 H9.5 V10.5 H1.5z"/>
<path d="M1.5 4.2 H4.3 V1.5" fill="none"/>
<path d="M6.5 6.2 L9.3 3.5 H14.5 V13.5 H6.5z"/>
<path d="M6.5 6.2 H9.3 V3.5" fill="none"/>
</g></svg>
<svg class="abs" style="left:1673px;top:358px" width="10" height="10" viewBox="0 0 10 10"><path d="M1 9 L9 1 M5 9 L9 5" stroke="#555" stroke-width="1"/></svg>
<div class="abs" style="left:635px;top:386px;width:1050px;height:239px;border-radius:4px;background:rgba(255,255,255,0.28);box-shadow:0 1px 2px rgba(0,0,0,0.2)"></div>
<div class="abs" style="left:649px;top:399px;width:37px;height:37.5px;border:1px solid rgba(200,188,212,0.65);border-radius:4px;background:rgba(255,255,255,0.3)"></div>
<svg class="abs" style="left:662px;top:411px" width="10" height="13" viewBox="0 0 10 13"><path fill="#8e8e8e" d="M0.8 5.6 L5 1 L9.2 5.6z M0.8 7.5 H9.2 L5 12.2z"/></svg>
<div class="abs" style="left:695px;top:399px;width:834px;height:37.5px;border:1px solid rgba(200,188,212,0.65);border-radius:4px;background:rgba(255,255,255,0.3)"></div>
<div class="t" style="left:709.60px;transform-origin:left center;top:410.90px;font-size:15px;font-weight:normal;color:#53585c;transform:scaleX(1.0742);">Contact establishment.</div>
<div class="abs" style="left:1538px;top:399px;width:88px;height:37.5px;border:1px solid rgba(200,188,212,0.65);border-radius:4px;background:rgba(255,255,255,0.3)"></div>
<div class="t" style="left:1552.50px;transform-origin:left center;top:410.90px;font-size:15px;font-weight:normal;color:#53585c;">1</div>
<div class="abs" style="left:1634px;top:399px;width:38px;height:37.5px;border:1px solid rgba(200,188,212,0.65);border-radius:4px;background:rgba(255,255,255,0.3)"></div>
<svg class="abs" style="left:1647px;top:410.5px" width="12" height="14" viewBox="0 0 12 14">
<path fill="#ee5f6c" d="M4 0.5 H8 L8.6 2.2 H11.6 V3.8 H0.4 V2.2 H3.4z M1.4 4.6 H10.6 L10 13.5 H2z"/>
<path fill="rgba(255,255,255,0.75)" d="M3.6 5.8 H4.5 V12 H3.6z M5.6 5.8 H6.5 V12 H5.6z M7.6 5.8 H8.5 V12 H7.6z"/>
<path fill="rgba(255,255,255,0.6)" d="M4.7 1.3 H7.3 L7.6 2.2 H4.4z"/>
</svg>
<div class="abs" style="left:649px;top:450.0px;width:1023px;height:56.5px;border:1px solid rgba(200,188,212,0.6);border-radius:4px;background:rgba(255,255,255,0.3)"></div>
<div class="abs" style="left:671px;top:472.5px;width:3px;height:3px;background:#8f8f8f"></div>
<div class="abs" style="left:671px;top:476.5px;width:3px;height:3px;background:#8f8f8f"></div>
<div class="abs" style="left:671px;top:480.5px;width:3px;height:3px;background:#8f8f8f"></div>
<div class="abs" style="left:696px;top:460.0px;width:411px;height:37px;border:1px solid rgba(200,188,212,0.65);border-radius:4px;background:rgba(255,255,255,0.35)"></div>
<div class="abs" style="left:1116px;top:460.0px;width:412px;height:37px;border:1px solid rgba(200,188,212,0.65);border-radius:4px;background:rgba(255,255,255,0.35)"></div>
<div class="abs" style="left:1537px;top:460.0px;width:79px;height:37px;border:1px solid rgba(200,188,212,0.65);border-radius:4px;background:rgba(255,255,255,0.35)"></div>
<div class="abs" style="left:1625px;top:460.0px;width:37px;height:37px;border:1px solid rgba(200,188,212,0.65);border-radius:4px;background:rgba(255,255,255,0.35)"></div>
<svg class="abs" style="left:1637px;top:470.8px" width="12" height="14" viewBox="0 0 12 14">
<path fill="#ee5f6c" d="M4 0.5 H8 L8.6 2.2 H11.6 V3.8 H0.4 V2.2 H3.4z M1.4 4.6 H10.6 L10 13.5 H2z"/>
<path fill="rgba(255,255,255,0.75)" d="M3.6 5.8 H4.5 V12 H3.6z M5.6 5.8 H6.5 V12 H5.6z M7.6 5.8 H8.5 V12 H7.6z"/>
<path fill="rgba(255,255,255,0.6)" d="M4.7 1.3 H7.3 L7.6 2.2 H4.4z"/>
</svg>
<div class="abs" style="left:710px;top:460.0px;width:383px;height:37px;overflow:hidden">
<div class="t" style="left:0.20px;transform-origin:left center;top:12.00px;font-size:15px;font-weight:normal;color:#53585c;transform:scaleX(1.0770);">The employee greeted, introduced himself, named the company and asked the client name</div>
</div>
<div class="abs" style="left:1131px;top:460.0px;width:384px;height:37px;overflow:hidden">
<div class="t" style="left:0.00px;transform-origin:left center;top:12.00px;font-size:15px;font-weight:normal;color:#53585c;transform:scaleX(1.0770);">The employee is friendly, polite and feels a smile in his voice</div>
</div>
<div class="t" style="left:1551.00px;transform-origin:left center;top:470.90px;font-size:15px;font-weight:normal;color:#939a9f;transform:scaleX(1.0054);">Score</div>
<div class="abs" style="left:649px;top:516.3px;width:1023px;height:56.5px;border:1px solid rgba(200,188,212,0.6);border-radius:4px;background:rgba(255,255,255,0.3)"></div>
<div class="abs" style="left:671px;top:538.8px;width:3px;height:3px;background:#8f8f8f"></div>
<div class="abs" style="left:671px;top:542.8px;width:3px;height:3px;background:#8f8f8f"></div>
<div class="abs" style="left:671px;top:546.8px;width:3px;height:3px;background:#8f8f8f"></div>
<div class="abs" style="left:696px;top:526.3px;width:411px;height:37px;border:1px solid rgba(200,188,212,0.65);border-radius:4px;background:rgba(255,255,255,0.35)"></div>
<div class="abs" style="left:1116px;top:526.3px;width:412px;height:37px;border:1px solid rgba(200,188,212,0.65);border-radius:4px;background:rgba(255,255,255,0.35)"></div>
<div class="abs" style="left:1537px;top:526.3px;width:79px;height:37px;border:1px solid rgba(200,188,212,0.65);border-radius:4px;background:rgba(255,255,255,0.35)"></div>
<div class="abs" style="left:1625px;top:526.3px;width:37px;height:37px;border:1px solid rgba(200,188,212,0.65);border-radius:4px;background:rgba(255,255,255,0.35)"></div>
<svg class="abs" style="left:1637px;top:537.0999999999999px" width="12" height="14" viewBox="0 0 12 14">
<path fill="#ee5f6c" d="M4 0.5 H8 L8.6 2.2 H11.6 V3.8 H0.4 V2.2 H3.4z M1.4 4.6 H10.6 L10 13.5 H2z"/>
<path fill="rgba(255,255,255,0.75)" d="M3.6 5.8 H4.5 V12 H3.6z M5.6 5.8 H6.5 V12 H5.6z M7.6 5.8 H8.5 V12 H7.6z"/>
<path fill="rgba(255,255,255,0.6)" d="M4.7 1.3 H7.3 L7.6 2.2 H4.4z"/>
</svg>
<div class="abs" style="left:710px;top:526.3px;width:383px;height:37px;overflow:hidden">
<div class="t" style="left:0.20px;transform-origin:left center;top:12.00px;font-size:15px;font-weight:normal;color:#53585c;transform:scaleX(1.0799);">Turns to the client by name.</div>
</div>
<div class="abs" style="left:1131px;top:526.3px;width:384px;height:37px;overflow:hidden">
<div class="t" style="left:0.00px;transform-origin:left center;top:12.00px;font-size:15px;font-weight:normal;color:#53585c;transform:scaleX(1.0792);">Throughout the call.</div>
</div>
<div class="t" style="left:1551.00px;transform-origin:left center;top:537.20px;font-size:15px;font-weight:normal;color:#939a9f;transform:scaleX(1.0054);">Score</div>
<div class="abs" style="left:649px;top:598px;width:1023px;height:1.2px;background:rgba(228,214,230,0.95)"></div>
<div class="abs" style="left:1138px;top:586px;width:45px;height:25.6px;border-radius:13px;background:#3579b7;box-shadow:0 1px 2px rgba(0,0,0,0.25)"></div>
<div class="t" style="left:1147.80px;transform-origin:left center;top:592.74px;font-size:12px;font-weight:bold;color:#fff;transform:scaleX(0.9808);">ADD</div>
<div class="abs" style="left:635px;top:651px;width:1050px;height:239px;border-radius:4px;background:rgba(255,255,255,0.28);box-shadow:0 1px 2px rgba(0,0,0,0.2)"></div>
<div class="abs" style="left:649px;top:664px;width:37px;height:37.5px;border:1px solid rgba(200,188,212,0.65);border-radius:4px;background:rgba(255,255,255,0.3)"></div>
<svg class="abs" style="left:662px;top:676px" width="10" height="13" viewBox="0 0 10 13"><path fill="#8e8e8e" d="M0.8 5.6 L5 1 L9.2 5.6z M0.8 7.5 H9.2 L5 12.2z"/></svg>
<div class="abs" style="left:695px;top:664px;width:834px;height:37.5px;border:1px solid rgba(200,188,212,0.65);border-radius:4px;background:rgba(255,255,255,0.3)"></div>
<div class="t" style="left:709.60px;transform-origin:left center;top:675.90px;font-size:15px;font-weight:normal;color:#53585c;transform:scaleX(1.0692);">Voices the purpose of the call.</div>
<div class="abs" style="left:1538px;top:664px;width:88px;height:37.5px;border:1px solid rgba(200,188,212,0.65);border-radius:4px;background:rgba(255,255,255,0.3)"></div>
<div class="t" style="left:1552.50px;transform-origin:left center;top:675.90px;font-size:15px;font-weight:normal;color:#53585c;">1</div>
<div class="abs" style="left:1634px;top:664px;width:38px;height:37.5px;border:1px solid rgba(200,188,212,0.65);border-radius:4px;background:rgba(255,255,255,0.3)"></div>
<svg class="abs" style="left:1647px;top:675.5px" width="12" height="14" viewBox="0 0 12 14">
<path fill="#ee5f6c" d="M4 0.5 H8 L8.6 2.2 H11.6 V3.8 H0.4 V2.2 H3.4z M1.4 4.6 H10.6 L10 13.5 H2z"/>
<path fill="rgba(255,255,255,0.75)" d="M3.6 5.8 H4.5 V12 H3.6z M5.6 5.8 H6.5 V12 H5.6z M7.6 5.8 H8.5 V12 H7.6z"/>
<path fill="rgba(255,255,255,0.6)" d="M4.7 1.3 H7.3 L7.6 2.2 H4.4z"/>
</svg>
<div class="abs" style="left:649px;top:715.0px;width:1023px;height:56.5px;border:1px solid rgba(200,188,212,0.6);border-radius:4px;background:rgba(255,255,255,0.3)"></div>
<div class="abs" style="left:671px;top:737.5px;width:3px;height:3px;background:#8f8f8f"></div>
<div class="abs" style="left:671px;top:741.5px;width:3px;height:3px;background:#8f8f8f"></div>
<div class="abs" style="left:671px;top:745.5px;width:3px;height:3px;background:#8f8f8f"></div>
<div class="abs" style="left:696px;top:725.0px;width:411px;height:37px;border:1px solid rgba(200,188,212,0.65);border-radius:4px;background:rgba(255,255,255,0.35)"></div>
<div class="abs" style="left:1116px;top:725.0px;width:412px;height:37px;border:1px solid rgba(200,188,212,0.65);border-radius:4px;background:rgba(255,255,255,0.35)"></div>
<div class="abs" style="left:1537px;top:725.0px;width:79px;height:37px;border:1px solid rgba(200,188,212,0.65);border-radius:4px;background:rgba(255,255,255,0.35)"></div>
<div class="abs" style="left:1625px;top:725.0px;width:37px;height:37px;border:1px solid rgba(200,188,212,0.65);border-radius:4px;background:rgba(255,255,255,0.35)"></div>
<svg class="abs" style="left:1637px;top:735.8px" width="12" height="14" viewBox="0 0 12 14">
<path fill="#ee5f6c" d="M4 0.5 H8 L8.6 2.2 H11.6 V3.8 H0.4 V2.2 H3.4z M1.4 4.6 H10.6 L10 13.5 H2z"/>
<path fill="rgba(255,255,255,0.75)" d="M3.6 5.8 H4.5 V12 H3.6z M5.6 5.8 H6.5 V12 H5.6z M7.6 5.8 H8.5 V12 H7.6z"/>
<path fill="rgba(255,255,255,0.6)" d="M4.7 1.3 H7.3 L7.6 2.2 H4.4z"/>
</svg>
<div class="abs" style="left:710px;top:725.0px;width:383px;height:37px;overflow:hidden">
<div class="t" style="left:0.20px;transform-origin:left center;top:12.00px;font-size:15px;font-weight:normal;color:#53585c;transform:scaleX(1.0770);">The dialogue is conducted by an employee, an initiative employee</div>
</div>
<div class="abs" style="left:1131px;top:725.0px;width:384px;height:37px;overflow:hidden">
<div class="t" style="left:0.00px;transform-origin:left center;top:12.00px;font-size:15px;font-weight:normal;color:#53585c;transform:scaleX(1.0770);">Говорит с клиентом понятными терминами, нет сленга</div>
</div>
<div class="t" style="left:1551.00px;transform-origin:left center;top:735.90px;font-size:15px;font-weight:normal;color:#939a9f;transform:scaleX(1.0054);">Score</div>
<div class="abs" style="left:649px;top:781.3px;width:1023px;height:56.5px;border:1px solid rgba(200,188,212,0.6);border-radius:4px;background:rgba(255,255,255,0.3)"></div>
<div class="abs" style="left:671px;top:803.8px;width:3px;height:3px;background:#8f8f8f"></div>
<div class="abs" style="left:671px;top:807.8px;width:3px;height:3px;background:#8f8f8f"></div>
<div class="abs" style="left:671px;top:811.8px;width:3px;height:3px;background:#8f8f8f"></div>
<div class="abs" style="left:696px;top:791.3px;width:411px;height:37px;border:1px solid rgba(200,188,212,0.65);border-radius:4px;background:rgba(255,255,255,0.35)"></div>
<div class="abs" style="left:1116px;top:791.3px;width:412px;height:37px;border:1px solid rgba(200,188,212,0.65);border-radius:4px;background:rgba(255,255,255,0.35)"></div>
<div class="abs" style="left:1537px;top:791.3px;width:79px;height:37px;border:1px solid rgba(200,188,212,0.65);border-radius:4px;background:rgba(255,255,255,0.35)"></div>
<div class="abs" style="left:1625px;top:791.3px;width:37px;height:37px;border:1px solid rgba(200,188,212,0.65);border-radius:4px;background:rgba(255,255,255,0.35)"></div>
<svg class="abs" style="left:1637px;top:802.0999999999999px" width="12" height="14" viewBox="0 0 12 14">
<path fill="#ee5f6c" d="M4 0.5 H8 L8.6 2.2 H11.6 V3.8 H0.4 V2.2 H3.4z M1.4 4.6 H10.6 L10 13.5 H2z"/>
<path fill="rgba(255,255,255,0.75)" d="M3.6 5.8 H4.5 V12 H3.6z M5.6 5.8 H6.5 V12 H5.6z M7.6 5.8 H8.5 V12 H7.6z"/>
<path fill="rgba(255,255,255,0.6)" d="M4.7 1.3 H7.3 L7.6 2.2 H4.4z"/>
</svg>
<div class="abs" style="left:710px;top:791.3px;width:383px;height:37px;overflow:hidden">
<div class="t" style="left:0.20px;transform-origin:left center;top:12.00px;font-size:15px;font-weight:normal;color:#53585c;transform:scaleX(1.0727);">The employee carefully listens and hears the client.</div>
</div>
<div class="abs" style="left:1131px;top:791.3px;width:384px;height:37px;overflow:hidden">
<div class="t" style="left:0.00px;transform-origin:left center;top:12.00px;font-size:15px;font-weight:normal;color:#53585c;transform:scaleX(1.1021);">Does not interrupt.</div>
</div>
<div class="t" style="left:1551.00px;transform-origin:left center;top:802.20px;font-size:15px;font-weight:normal;color:#939a9f;transform:scaleX(1.0054);">Score</div>
<div class="abs" style="left:649px;top:863px;width:1023px;height:1.2px;background:rgba(228,214,230,0.95)"></div>
<div class="abs" style="left:1138px;top:851px;width:45px;height:25.6px;border-radius:13px;background:#3579b7;box-shadow:0 1px 2px rgba(0,0,0,0.25)"></div>
<div class="t" style="left:1147.80px;transform-origin:left center;top:857.74px;font-size:12px;font-weight:bold;color:#fff;transform:scaleX(0.9808);">ADD</div>
</body></html>
